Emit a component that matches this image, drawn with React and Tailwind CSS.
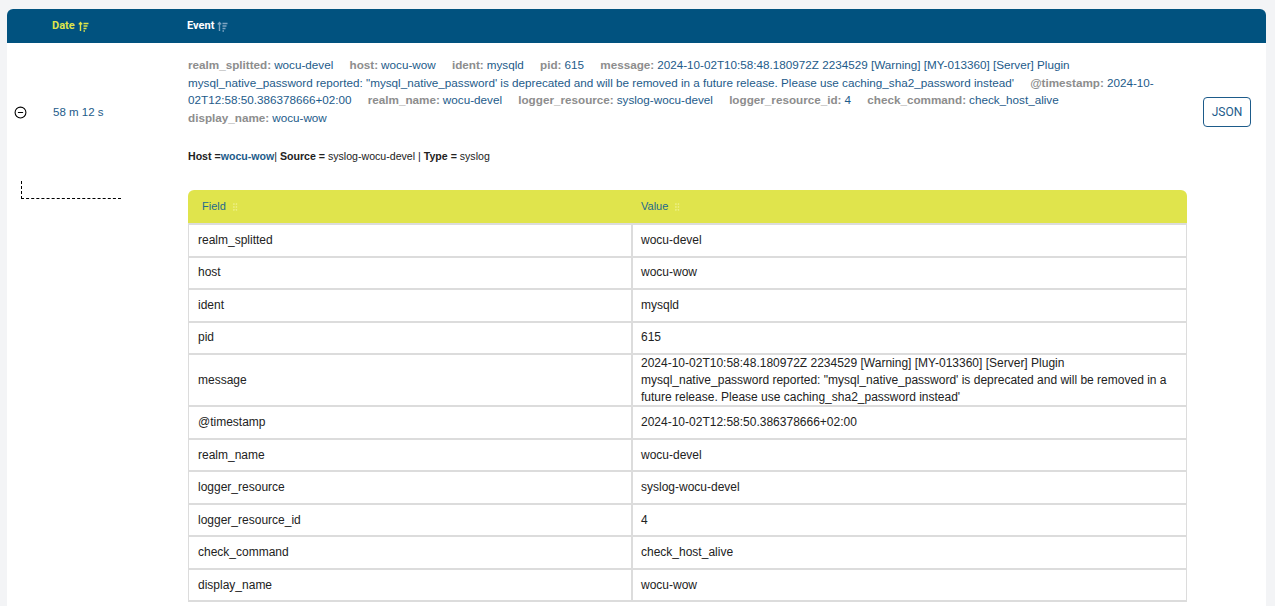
import { CircleMinus, GripVertical } from "lucide-react";

const summary = [
  ["realm_splitted", "wocu-devel"],
  ["host", "wocu-wow"],
  ["ident", "mysqld"],
  ["pid", "615"],
  [
    "message",
    "2024-10-02T10:58:48.180972Z 2234529 [Warning] [MY-013360] [Server] Plugin mysql_native_password reported: \"mysql_native_password' is deprecated and will be removed in a future release. Please use caching_sha2_password instead'",
  ],
  ["@timestamp", "2024-10-02T12:58:50.386378666+02:00"],
  ["realm_name", "wocu-devel"],
  ["logger_resource", "syslog-wocu-devel"],
  ["logger_resource_id", "4"],
  ["check_command", "check_host_alive"],
  ["display_name", "wocu-wow"],
];

const SortIcon = ({ className }) => (
  <svg width="11" height="11" viewBox="0 0 11 11" fill="none" stroke="currentColor" strokeWidth="1.4" className={className}>
    <path d="M2.5 1.5v8.5M0.8 3.4 2.5 1.5 4.2 3.4" />
    <path d="M5.5 2.5h5M5.5 5h4M5.5 7.5h3M5.5 10h1.5" />
  </svg>
);

const App = () => {
  return (
    <div className="min-h-screen bg-[#f3f4f6] pt-[9px] pl-[7px] pr-[9px] font-['Liberation_Sans',Arial,sans-serif]">
      <div className="bg-white rounded-t-md">
        <div className="grid grid-cols-[40px_140px_1fr_76px] h-[34px] items-center bg-[#01527f] rounded-t-md text-[11px] font-bold font-['Roboto',sans-serif]">
          <div />
          <div className="flex items-center gap-[3px] pl-[5px] text-[#dfe44b]">
            Date
            <SortIcon />
          </div>
          <div className="flex items-center gap-[3px] text-white">
            Event
            <SortIcon className="text-[#7fa5c2]" />
          </div>
          <div />
        </div>

        <div className="grid grid-cols-[40px_140px_1fr_76px] h-[138px] items-center">
          <div className="flex pl-[7px]">
            <CircleMinus size={13} strokeWidth={2} className="text-black" />
          </div>
          <div className="pl-[6px] pt-[1px] text-[11.5px] text-[#1d5b8a]">58 m 12 s</div>
          <div className="self-start pt-[13px] pl-[1px] pr-[20px]">
            <div className="text-[11.7px] leading-[17.7px]">
              {summary.map(([k, v]) => (
                <span key={k} className="mr-[13px]">
                  <span className="font-bold text-[#8d8d8d] mr-[3px]">{k}:</span>
                  <span className="text-[#1d5b8a]">{v}</span>{" "}
                </span>
              ))}
            </div>
            <div className="mt-[22px] text-[10.6px] text-[#222]">
              <span className="font-bold">Host =</span>
              <span className="font-bold text-[#1d5b8a]">wocu-wow</span>|{" "}
              <span className="font-bold">Source = </span> syslog-wocu-devel |{" "}
              <span className="font-bold">Type = </span> syslog
            </div>
          </div>
          <div className="flex pl-[13px]">
            <button className="h-[30px] w-[48px] rounded-[4px] border border-[#1d5b8a] text-[12px] text-[#1d5b8a] font-['Roboto',sans-serif]">
              JSON
            </button>
          </div>
        </div>

        <div className="grid grid-cols-[181px_1fr_79px]">
          <div className="pl-[14px]">
            <div className="h-[18px] w-[100px] border-l border-b border-dashed border-black" />
          </div>
          <div className="pt-[9px] pb-[4px]">
            <div className="grid grid-cols-[444px_1fr] h-[33px] items-center bg-[#e0e44c] rounded-t-md text-[11px] text-[#236a8c]">
              <div className="flex items-center gap-[4px] pl-[14px]">
                Field
                <GripVertical size={10} className="text-[#eef08a]" />
              </div>
              <div className="flex items-center gap-[4px] pl-[9px]">
                Value
                <GripVertical size={10} className="text-[#eef08a]" />
              </div>
            </div>
            {summary.map(([k, v]) => (
              <div
                key={k}
                className="grid grid-cols-[444px_1fr] border-t-2 border-x border-[#dcdcdc] last:border-b-2 text-[12px] text-[#222]"
              >
                <div className="flex items-center min-h-[30.5px] pl-[9px] border-r-2 border-[#dcdcdc] leading-[15px]">
                  {k}
                </div>
                <div
                  className={
                    k === "message"
                      ? "pl-[8px] pr-[12px] leading-[16.8px]"
                      : "flex items-center min-h-[30.5px] pl-[8px] leading-[15px]"
                  }
                >
                  {v}
                </div>
              </div>
            ))}
          </div>
          <div />
        </div>
      </div>
    </div>
  );
};

export default App;
